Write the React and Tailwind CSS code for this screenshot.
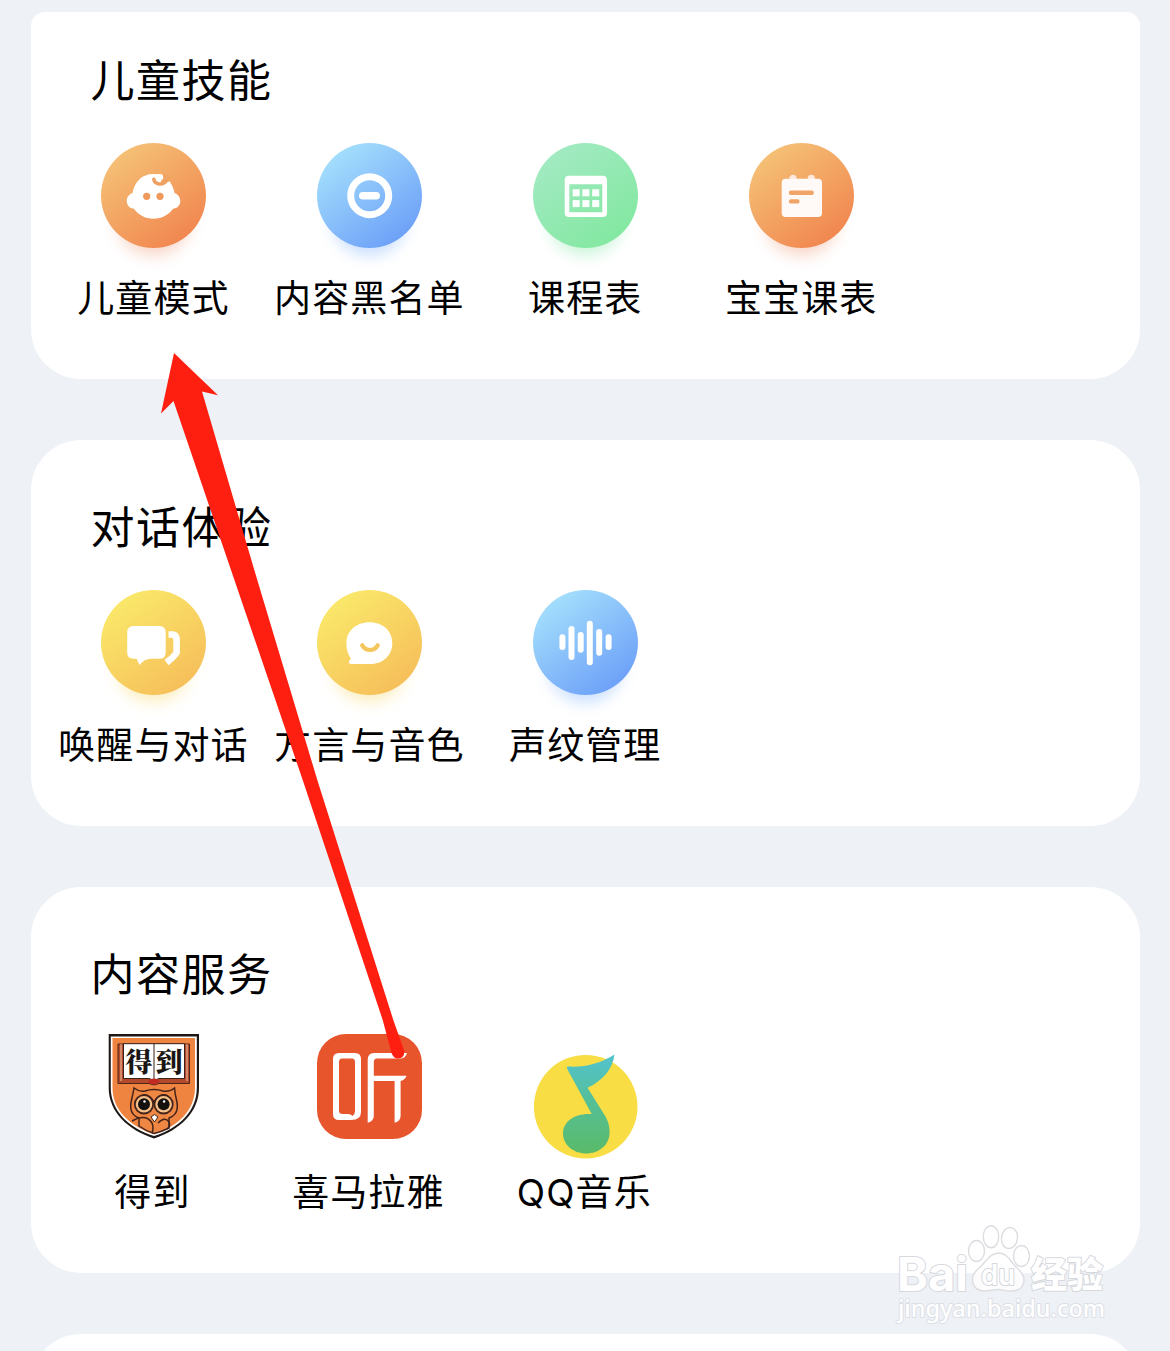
import React from "react";

const FONT = "font-['Inter','Noto_Sans_CJK_SC',sans-serif]";

const PALETTES = {
  orange: { from: "#f5c277", to: "#f1854f", glow: "#f2a88a" },
  blue: { from: "#a5e0fc", to: "#6c9ff8", glow: "#8fbcfb" },
  green: { from: "#a3eac3", to: "#82e8a0", glow: "#93e9b2" },
  yellow: { from: "#fae96a", to: "#f6be5a", glow: "#f9dd7c" },
};

function Disc({ id, palette, children }) {
  const p = PALETTES[palette];
  return (
    <svg viewBox="0 0 105 105" className="h-[105px] w-[105px] overflow-visible">
      <defs>
        <linearGradient id={id} x1="0.15" y1="0.08" x2="0.8" y2="0.95">
          <stop offset="0" stopColor={p.from} />
          <stop offset="1" stopColor={p.to} />
        </linearGradient>
        <filter id={id + "-b"} x="-50%" y="-50%" width="200%" height="200%">
          <feGaussianBlur stdDeviation="8" />
        </filter>
      </defs>
      <ellipse cx="52.5" cy="78" rx="36" ry="34" fill={p.glow} opacity="0.5" filter={`url(#${id}-b)`} />
      <circle cx="52.5" cy="52.5" r="52.5" fill={`url(#${id})`} />
      {children}
    </svg>
  );
}

function KidIcon() {
  return (
    <Disc id="kid" palette="orange">
      <path
        fill="#fff"
        d="M52.500 31C64.500 31 71.500 39 73.500 50C76.500 51 79.300 54 79.300 58C79.300 62.500 76 65.500 72 65.800C67.500 72 61 75.700 52.500 75.700C44 75.700 37.500 72 33 65.800C29 65.500 25.700 62.500 25.700 58C25.700 54 28.500 51 31.500 50C33.500 39 40.500 31 52.500 31Z"
      />
      <path d="M61.500 30L70 34L67.500 39L60 39Z" fill="#f0a462" />
      <path d="M52.800 36.300C53.800 42 62 42.500 65.400 37.800" fill="none" stroke="#f0a161" strokeWidth="3.600" strokeLinecap="round" />
      <circle cx="59" cy="34.300" r="3.200" fill="#fff" />
      <circle cx="45.700" cy="53.300" r="3.600" fill="#f0995c" />
      <circle cx="59" cy="53.300" r="3.600" fill="#f0995c" />
    </Disc>
  );
}

function BlockIcon() {
  return (
    <Disc id="block" palette="blue">
      <circle cx="52.700" cy="52.700" r="19" fill="none" stroke="#fff" strokeWidth="7" />
      <rect x="42" y="49" width="21" height="7.600" rx="3.800" fill="#fff" />
    </Disc>
  );
}

function TimetableIcon() {
  return (
    <Disc id="timetable" palette="green">
      <path fill="#fff" fillRule="evenodd" d="M36 32.700H69.700Q74 32.700 74 37V69.700Q74 74 69.700 74H36Q31.700 74 31.700 69.700V37Q31.700 32.700 36 32.700ZM36.300 41.300V69.300H69.300V41.300Z" />
      {[39.7, 49.4, 59.2].map((x) =>
        [46.3, 57.1].map((y) => <rect key={x + "-" + y} x={x} y={y} width="7" height="7" fill="#fff" />)
      )}
    </Disc>
  );
}

function NoteIcon() {
  return (
    <Disc id="note" palette="orange">
      <circle cx="44" cy="35.300" r="3.600" fill="#fce8dc" />
      <circle cx="62.300" cy="35.300" r="3.600" fill="#fce8dc" />
      <rect x="32.700" y="35.700" width="40.300" height="38.300" rx="4" fill="#fffaf7" />
      <path d="M42 49.700H62.700M42 58.400H48.400" stroke="#f0a468" strokeWidth="4.400" strokeLinecap="round" />
    </Disc>
  );
}

function TalkIcon() {
  return (
    <Disc id="talk" palette="yellow">
      <path fill="#fff" d="M32.500 36H58.500Q64.700 36 64.700 42.500V62.500Q64.700 68.700 58.500 68.700H50Q43.500 68.700 38.500 75L35.500 68.700H32.500Q26.200 68.700 26.200 62.500V42.500Q26.200 36 32.500 36Z" />
      <path d="M67.500 44.500H71.500Q75.600 45 75.600 50V62.500Q73.500 66.500 65.500 72.500" fill="none" stroke="#fff" strokeWidth="6.600" strokeLinejoin="round" />
    </Disc>
  );
}

function VoiceIcon() {
  return (
    <Disc id="voice" palette="yellow">
      <path fill="#fff" d="M52.500 32.300C66 32.300 75.300 41 75.300 53C75.300 65 66.500 74 53.500 74H34C31.500 74 31.300 71.500 33 69.800L34 68.700C31 65 29.400 59.500 29.400 53.500C29.400 41 39 32.300 52.500 32.300Z" />
      <path d="M45.200 55.300C49 61.500 57 61.500 60.700 55.300" fill="none" stroke="#f5c65c" strokeWidth="4.200" strokeLinecap="round" />
    </Disc>
  );
}

const BARS = [
  [26.4, 44.3, 60],
  [35.5, 36, 70],
  [44.7, 42, 62.7],
  [53.8, 30.7, 75.3],
  [63.2, 39, 65.7],
  [72.6, 44.3, 60],
];

function WaveIcon() {
  return (
    <Disc id="wave" palette="blue">
      {BARS.map(([x, a, b]) => (
        <rect key={x} x={x} y={a} width="6" height={b - a} rx="3" fill="#fff" />
      ))}
    </Disc>
  );
}

function DedaoIcon() {
  return (
    <svg viewBox="0 0 105 105" className="h-[105px] w-[105px]">
      <path d="M7.700 0H98V54C98 78 79 96 53 104.500C27 96 7.700 78 7.700 54Z" fill="#1d1715" />
      <path d="M9.800 2.400H95.800V54C95.800 77 78 94.300 53 102C28 94.300 9.800 77 9.800 54Z" fill="#fff" />
      <path d="M11.500 4H94V54C94 76 77 92.500 53 100.300C29 92.500 11.500 76 11.500 54Z" fill="#ef8440" />
      <path d="M17 10H88.500V49.500H58L53 51L48 49.500H17Z" fill="#b44a2c" stroke="#4d2417" strokeWidth="1" />
      <path d="M20 10V47M86 10V47" stroke="#f3c6a8" strokeWidth="1" />
      <path d="M22.500 9.700H83.500V44.500H58L53 46.500L48 44.500H22.500Z" fill="#fff" stroke="#3b2019" strokeWidth="1" />
      <path d="M53 9.700V46" stroke="#3b2019" strokeWidth="1" />
      <ellipse cx="53" cy="47.500" rx="5.500" ry="3" fill="#c22b22" />
      <text x="24.500" y="37.500" fontSize="27" fontWeight="900" fill="#1b1614" textLength="57" lengthAdjust="spacing" fontFamily="Noto Serif CJK SC, Noto Sans CJK SC, serif">得到</text>
      <g stroke="#43231a" strokeWidth="1.500" fill="#ee8743">
        <path d="M33 54Q38 58 44 57Q53 54 62 57Q69 58 73.500 54Q74 60 75.500 66Q79 80 68 84V94Q60 98 53 99.500Q45 97 38 92V84Q27 80 30.500 66Q32 60 33 54Z" />
        <path d="M31 87Q45 79 51 89Q53 94 51 99M57 89Q64 82 68 88Q70 92 66 95M40 62Q47 58 53 68Q59 58 67 62" fill="none" />
        <path d="M50 83L53.500 80.500L57 83L53.500 88Z" fill="#fff" strokeWidth="1" />
      </g>
      {[43, 62.6].map((x) => (
        <g key={x}>
          <circle cx={x} cy="70.300" r="9.200" fill="#f6c08a" stroke="#43231a" strokeWidth="1.800" />
          <circle cx={x} cy="70.300" r="6" fill="#15110f" />
          <circle cx={x + 0.5} cy="67.500" r="1.200" fill="#fff" />
        </g>
      ))}
    </svg>
  );
}

function XimalayaIcon() {
  return (
    <svg viewBox="0 0 105 105" className="h-[105px] w-[105px]">
      <rect width="105" height="105" rx="29" fill="#e7552d" />
      <path
        fill="#fff"
        fillRule="evenodd"
        d="M22 19H38Q44 19 44 25V78Q44 86 34 86H22Q16 86 16 80V25Q16 19 22 19ZM22 28Q22 24.500 25 24.500H35Q38 24.500 38 28V77Q38 80.300 35.500 82Q34 80 31 80H25.500Q22 80 22 77Z"
      />
      <path fill="#fff" d="M50.700 26Q50.700 19 57 19H90Q88.500 24.500 83 24.500H60Q56.800 24.500 56.800 28V41.700H89.500Q88.500 45.500 83.600 47V82Q83.600 87 77.600 88.700V47H56.800V82Q56.800 87 50.700 88.700Z" />
    </svg>
  );
}

function QQMusicIcon() {
  return (
    <svg viewBox="0 0 105 105" className="mt-5 -mb-5 h-[105px] w-[105px]">
      <defs>
        <linearGradient id="qq" x1="0.5" y1="0" x2="0.5" y2="1">
          <stop offset="0" stopColor="#52c3cf" />
          <stop offset="0.5" stopColor="#55bf95" />
          <stop offset="1" stopColor="#5aba69" />
        </linearGradient>
      </defs>
      <circle cx="52.700" cy="52.700" r="51.800" fill="#f9dd45" />
      <path
        d="M35.500 12.500C51 13.500 68 9.500 81.500 0.500C80 14 70 27 54.500 33.700L72.500 62.500C75.500 68 76.800 73 76.600 79.500C76 91 66 99.500 53.300 99.500C40 99.500 30 90.500 30 79.500C30 68 41 59 58.700 60L34.500 15.500C33.500 13.500 33.800 12.500 35.500 12.500Z"
        fill="url(#qq)"
      />
    </svg>
  );
}

function Card({ title, items, first, tight }) {
  return (
    <section
      className={
        first
          ? "h-[367px] rounded-b-[50px] rounded-t-[14px] bg-white px-[15px] pt-[39px]"
          : "h-[386px] rounded-[50px] bg-white px-[15px] pt-[58px]"
      }
    >
      <h2 className="pl-[45px] text-[44px] leading-[60px] font-normal tracking-[1.5px]">{title}</h2>
      <div className={tight ? "mt-[29px] grid grid-cols-5" : "mt-8 grid grid-cols-5"}>
        {items.map(([label, Icon]) => (
          <div key={label} className="flex flex-col items-center">
            <Icon />
            <span
              className={
                tight
                  ? "mt-[29px] -ml-0.5 text-[37px] leading-[50px] tracking-[1.100px] whitespace-nowrap"
                  : "mt-[26px] text-[37px] leading-[50px] tracking-[1.100px] whitespace-nowrap"
              }
            >
              {label}
            </span>
          </div>
        ))}
      </div>
    </section>
  );
}

function Watermark() {
  return (
    <svg viewBox="0 0 240 120" className="absolute top-[1215px] left-[880px] h-[120px] w-[240px]">
      <g fill="#fff" fillOpacity="0.8" stroke="#dcdde1" strokeWidth="1.400">
        <ellipse cx="96.500" cy="36" rx="8" ry="10.500" />
        <ellipse cx="111" cy="21.700" rx="7.700" ry="11" />
        <ellipse cx="129.500" cy="23" rx="8" ry="10.500" transform="rotate(8 129.500 23)" />
        <ellipse cx="141.500" cy="41" rx="8" ry="10.500" />
        <path d="M119 38C128 38 131 48 138 54C148 63 145 76 131 76C125 76 122 74.500 118 74.500C113 74.500 110 76 105 76C91 76 89 62 98 54C106 48 109 38 119 38Z" />
      </g>
      <g fill="#fff" stroke="#d6d8dd" strokeWidth="2" strokeLinejoin="round" paintOrder="stroke">
        <text x="17" y="75.500" fontFamily="Inter, sans-serif" fontWeight="700" fontSize="47" textLength="71" lengthAdjust="spacingAndGlyphs">Bai</text>
        <text x="101" y="70" fontFamily="Inter, sans-serif" fontWeight="600" fontSize="28" textLength="34" lengthAdjust="spacingAndGlyphs">du</text>
        <text x="151" y="73" fontFamily="Noto Sans CJK SC, sans-serif" fontWeight="900" fontSize="36" textLength="72" lengthAdjust="spacingAndGlyphs">经验</text>
        <text x="18" y="102" fontFamily="Noto Sans, sans-serif" fontWeight="500" fontSize="24" textLength="207" lengthAdjust="spacingAndGlyphs" stroke="#dcdfe6">jingyan.baidu.com</text>
      </g>
    </svg>
  );
}

function Arrow() {
  return (
    <svg viewBox="0 0 270 720" className="absolute top-[345px] left-[150px] h-[720px] w-[270px]">
      <path d="M24 8L68 50.300L52 46.500L104.300 225L167.300 435L243.300 675L254.300 706Q254.500 713.500 248 713.500Q243.500 713.500 241.500 708L232.700 675L152.700 435L81 225L23.500 56L11 68.500Z" fill="#ff1f10" />
    </svg>
  );
}

export default function App() {
  return (
    <main className={`relative h-[1351px] w-[1170px] overflow-hidden bg-[#eef1f6] text-black ${FONT}`} lang="zh-CN">
      <div className="flex flex-col gap-[61px] pt-3 pr-[30px] pl-[30.500px]">
        <Card
          first
          title="儿童技能"
          items={[
            ["儿童模式", KidIcon],
            ["内容黑名单", BlockIcon],
            ["课程表", TimetableIcon],
            ["宝宝课表", NoteIcon],
          ]}
        />
        <Card
          title="对话体验"
          items={[
            ["唤醒与对话", TalkIcon],
            ["方言与音色", VoiceIcon],
            ["声纹管理", WaveIcon],
          ]}
        />
        <Card
          tight
          title="内容服务"
          items={[
            ["得到", DedaoIcon],
            ["喜马拉雅", XimalayaIcon],
            ["QQ音乐", QQMusicIcon],
          ]}
        />
        <section className="h-20 rounded-t-[50px] bg-white" />
      </div>
      <Arrow />
      <Watermark />
    </main>
  );
}
